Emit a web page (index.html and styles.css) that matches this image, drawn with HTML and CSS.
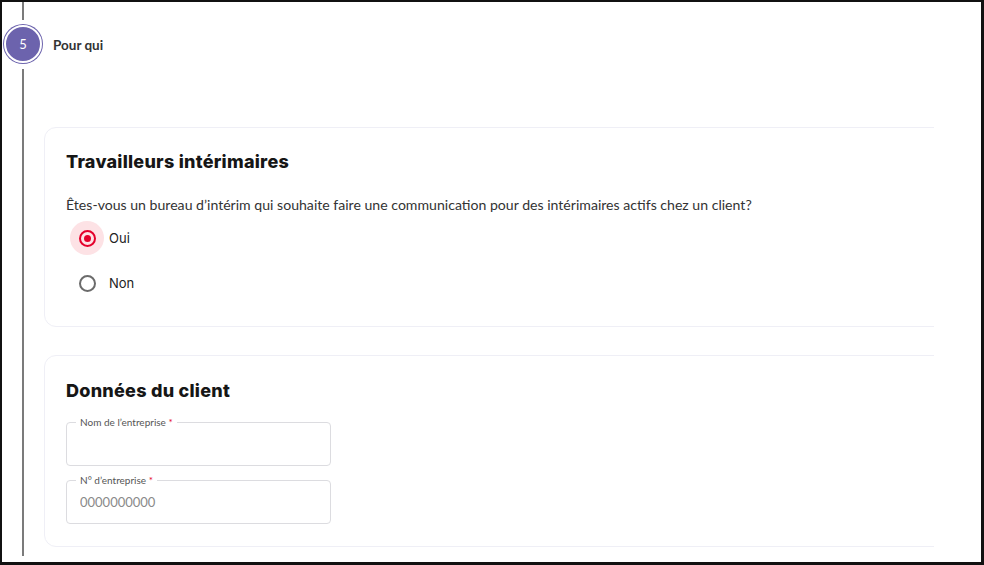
FILE: index.html
```html
<!DOCTYPE html>
<html lang="fr">
<head>
    <meta charset="UTF-8">
    <meta name="viewport" content="width=device-width, initial-scale=1.0">
    <title>Pour qui</title>
    <link rel="stylesheet" href="styles.css">
</head>
<body>
    <div class="frame">
        <div class="rail">
            <div class="rail-line rail-line-top"></div>
            <div class="step-badge">5</div>
            <div class="rail-line rail-line-rest"></div>
        </div>

        <div class="content">
            <div class="step-head">Pour qui</div>

            <div class="card card-temp">
                <h2 class="card-title">Travailleurs intérimaires</h2>
                <p class="question">Êtes-vous un bureau d’intérim qui souhaite faire une communication pour des intérimaires actifs chez un client?</p>

                <label class="radio-row radio-row-first">
                    <span class="radio-halo checked"><span class="radio-dot checked"></span></span>
                    <span class="radio-label">Oui</span>
                </label>
                <label class="radio-row">
                    <span class="radio-halo"><span class="radio-dot"></span></span>
                    <span class="radio-label">Non</span>
                </label>
            </div>

            <div class="card card-client">
                <h2 class="card-title">Données du client</h2>

                <div class="field field-first">
                    <label class="field-label">Nom de l’entreprise <span class="req">*</span></label>
                    <input class="field-input" type="text">
                </div>
                <div class="field">
                    <label class="field-label">N° d’entreprise <span class="req">*</span></label>
                    <input class="field-input" type="text" placeholder="0000000000">
                </div>
            </div>
        </div>
    </div>
</body>
</html>
```

FILE: styles.css
```css
body {
    margin: 0;
    background-color: #fff;
    font-family: 'Lato', 'Liberation Sans', sans-serif;
    color: #333;
}

.frame {
    height: 565px;
    box-sizing: border-box;
    border: 2px solid #111;
    border-right-width: 3px;
    border-bottom-width: 3px;
    display: flex;
}

/* timeline on the left */
.rail {
    width: 42px;
    display: flex;
    flex-direction: column;
    align-items: center;
}

.rail-line {
    width: 2px;
    background-color: #7b7b7b;
}

.rail-line-top {
    height: 18px;
}

.rail-line-rest {
    flex: 1;
    margin-top: 6px;
    margin-bottom: 6px;
}

.step-badge {
    width: 34px;
    height: 34px;
    margin-top: 5px;
    border-radius: 50%;
    background-color: #6c63ad;
    border: 2px solid #fff;
    box-shadow: 0 0 0 1px #6c63ad;
    color: #fff;
    font-size: 13px;
    display: flex;
    align-items: center;
    justify-content: center;
}

.content {
    width: 890px;
    overflow: hidden;
}

.step-head {
    height: 86px;
    display: flex;
    align-items: center;
    padding-left: 9px;
    font-size: 13.5px;
    font-weight: 700;
    color: #333;
}

.card {
    width: 940px;
    box-sizing: border-box;
    border: 1px solid #efeff6;
    border-radius: 12px;
    padding: 20px 21px 26px;
}

.card-temp {
    margin-top: 39px;
}

.card-client {
    margin-top: 28px;
    padding-top: 21px;
    padding-bottom: 22px;
}

.card-title {
    margin: 0;
    font-family: 'Inter', sans-serif;
    font-size: 18px;
    font-weight: 800;
    letter-spacing: 0.25px;
    line-height: 28px;
    color: #161616;
}

.question {
    margin: 19px 0 0;
    font-size: 14.1px;
    line-height: 20px;
}

.radio-row {
    display: flex;
    align-items: center;
    margin-top: 11px;
}

.radio-row-first {
    margin-top: 6px;
}

.radio-halo {
    width: 34px;
    height: 34px;
    margin-left: 4px;
    border-radius: 50%;
    display: flex;
    align-items: center;
    justify-content: center;
}

.radio-halo.checked {
    background-color: #fde2e5;
}

.radio-dot {
    width: 13px;
    height: 13px;
    border: 2px solid #6b6b6b;
    border-radius: 50%;
    display: flex;
    align-items: center;
    justify-content: center;
}

.radio-dot.checked {
    border-color: #e4002b;
}

.radio-dot.checked::after {
    content: "";
    width: 7px;
    height: 7px;
    border-radius: 50%;
    background-color: #e4002b;
}

.radio-label {
    margin-left: 5px;
    font-family: 'Inter', sans-serif;
    font-size: 13px;
    color: #222;
}

/* outlined inputs */
.field {
    position: relative;
    width: 265px;
    height: 44px;
    box-sizing: border-box;
    margin-top: 14px;
    border: 1px solid #dcdce0;
    border-radius: 4px;
}

.field-first {
    margin-top: 17px;
}

.field-label {
    position: absolute;
    top: -7px;
    left: 9px;
    padding: 0 4px;
    background-color: #fff;
    font-size: 10px;
    line-height: 12px;
    color: #555;
}

.req {
    color: #e4002b;
}

.field-input {
    width: 100%;
    height: 100%;
    box-sizing: border-box;
    border: none;
    background: transparent;
    padding: 0 13px;
    font-family: 'Lato', sans-serif;
    font-size: 13px;
    color: #333;
    outline: none;
}

.field-input::placeholder {
    color: #8a8a8a;
}
```
